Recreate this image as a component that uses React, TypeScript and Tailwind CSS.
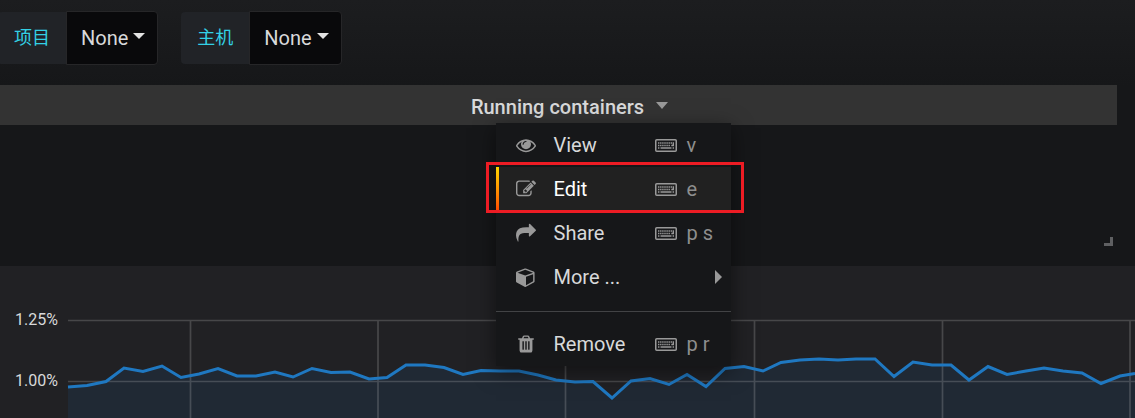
import type { ReactNode } from "react";

const points =
  "68,387 87,385.5 106,381.5 124,368 143,371.5 162,366 181,377.5 199,374 218,368.5 237,376 256,376 275,372 293,377 312,368.5 331,372.5 350,372 369,379 387,377.5 406,365 425,365 444,367.5 463,374.5 481,370.5 500,371 519,371 538,375 556,380 575,382 593,381.5 612,398 631,381 650,378.5 669,384.5 687,374.5 706,386.5 725,368.5 744,366.5 763,371 781,362.5 800,360 819,359 838,360 856,359 875,359 894,376.5 913,362 932,365 951,365 969,380 988,366.5 1007,374.5 1026,371 1044,368 1063,371 1082,373 1101,383.5 1120,376 1135,373.5";

const eye =
  "M1664 960q-152-236-381-353 61 104 61 225 0 185-131.5 316.5t-316.5 131.5-316.5-131.5-131.5-316.5q0-121 61-225-229 117-381 353 133 205 333.5 326.5t434.5 121.5 434.5-121.5 333.5-326.5zm-720-384q0-20-14-34t-34-14q-125 0-214.5 89.5t-89.5 214.5q0 20 14 34t34 14 34-14 14-34q0-86 61-147t147-61q20 0 34-14t14-34zm848 384q0 34-20 69-140 230-376.5 368.5t-499.5 138.5-499.5-139-376.5-368q-20-35-20-69t20-69q140-229 376.5-368t499.5-139 499.5 139 376.5 368q20 35 20 69z";
const pencil =
  "M888 1184l116-116-152-152-116 116v56h96v96h56zm440-720q-16-16-33 1l-350 350q-17 17-1 33t33-1l350-350q17-17 1-33zm80 594v190q0 119-84.5 203.5t-203.5 84.5h-832q-119 0-203.5-84.5t-84.5-203.5v-832q0-119 84.5-203.5t203.5-84.5h832q63 0 117 25 15 7 18 23 3 17-9 29l-49 49q-14 14-32 8-23-6-45-6h-832q-66 0-113 47t-47 113v832q0 66 47 113t113 47h832q66 0 113-47t47-113v-126q0-13 9-22l64-64q15-15 35-7t20 29zm-96-738l288 288-672 672h-288v-288zm444 132l-92 92-288-288 92-92q28-28 68-28t68 28l152 152q28 28 28 68t-28 68z";
const share =
  "M1792 640q0 26-19 45l-512 512q-19 19-45 19t-45-19-19-45v-256h-224q-98 0-175.5 6t-154 21.5-133 42.5-105.5 69.5-80 101-48.5 138.5-17.5 181q0 55 5 123 0 6 2.5 23.5t2.5 26.5q0 15-8.5 25t-23.5 10q-16 0-28-17-7-9-13-22t-13.5-30-10.5-24q-127-285-127-451 0-199 53-333 162-403 875-403h224v-256q0-26 19-45t45-19 45 19l512 512q19 19 19 45z";
const cube =
  "M896 1629l640-349v-636l-640 233v752zm-64-865l698-254-698-254-698 254zm832-252v768q0 35-18 65t-49 47l-704 384q-28 16-61 16t-61-16l-704-384q-31-17-49-47t-18-65v-768q0-40 23-73t61-47l704-256q22-8 44-8t44 8l704 256q38 14 61 47t23 73z";
const trash =
  "M704 1376v-704q0-14-9-23t-23-9h-64q-14 0-23 9t-9 23v704q0 14 9 23t23 9h64q14 0 23-9t9-23zm256 0v-704q0-14-9-23t-23-9h-64q-14 0-23 9t-9 23v704q0 14 9 23t23 9h64q14 0 23-9t9-23zm256 0v-704q0-14-9-23t-23-9h-64q-14 0-23 9t-9 23v704q0 14 9 23t23 9h64q14 0 23-9t9-23zm-544-992h448l-48-117q-7-9-17-11h-317q-10 2-17 11zm928 32v64q0 14-9 23t-23 9h-96v948q0 83-47 143.5t-113 60.5h-832q-66 0-113-58.5t-47-141.5v-952h-96q-14 0-23-9t-9-23v-64q0-14 9-23t23-9h309l70-167q15-37 54-63t79-26h320q40 0 79 26t54 63l70 167h309q14 0 23 9t9 23z";

function Glyph({ d }: { d: string }) {
  return (
    <svg viewBox="0 0 1792 1792" className="size-5 shrink-0 fill-[#999]" aria-hidden="true">
      <path d={d} />
    </svg>
  );
}

function Keyboard() {
  return (
    <svg viewBox="0 0 22 13" className="h-[13px] w-[22px] shrink-0" aria-hidden="true">
      <rect x="0.75" y="0.75" width="20.5" height="11.5" rx="1" fill="none" stroke="#999" strokeWidth="1.5" />
      <path
        d="M3 4H17M3 6.5H15.5M3 9H4.4M17.6 9H19"
        stroke="#999"
        strokeWidth="1.4"
        strokeDasharray="1.4 0.7"
        fill="none"
      />
      <path d="M5.5 9H16.5M18.3 3.3V6.5H16.3" stroke="#999" strokeWidth="1.4" fill="none" />
    </svg>
  );
}

function Variable({ label }: { label: string }) {
  return (
    <div className="flex h-[54px]">
      <span className="my-px flex items-center rounded-l bg-[#212327] px-4 text-lg text-[#33d1e5]">
        {label}
      </span>
      <button
        type="button"
        aria-label={`${label} None`}
        className="flex items-center gap-[5px] rounded-r border border-[#262628] bg-[#09090b] pr-3 pl-3.5 text-xl text-[#d8d9da]"
      >
        None
        <svg viewBox="0 0 12 6" className="-mt-1 h-1.5 w-3 fill-[#e3e3e3]" aria-hidden="true">
          <path d="M0 0h12l-6 6z" />
        </svg>
      </button>
    </div>
  );
}

function Item({
  icon,
  label,
  keys,
  active,
  children,
}: {
  icon: string;
  label: string;
  keys?: string;
  active?: boolean;
  children?: ReactNode;
}) {
  return (
    <li role="none">
      <button
        type="button"
        role="menuitem"
        className={
          active
            ? "relative flex h-11 w-full items-center bg-[#212121] pl-5 text-left text-xl text-white"
            : "relative flex h-11 w-full items-center pl-5 text-left text-xl text-[#d8d9da]"
        }
      >
        {active && (
          <span className="absolute inset-y-0 left-0 w-[3px] bg-linear-to-b from-[#ffd500] to-[#ff4400]" />
        )}
        <Glyph d={icon} />
        <span className="ml-[18px] w-[101px]">{label}</span>
        {keys && (
          <span className="flex items-center gap-2.5 text-[#8e8e8e]">
            <Keyboard />
            {keys}
          </span>
        )}
        {children}
      </button>
    </li>
  );
}

export default function App() {
  return (
    <main className="min-h-screen overflow-hidden bg-[#161719] font-[Roboto,'Noto_Sans_CJK_SC',sans-serif]">
      <header className="flex h-[85px] items-start gap-[23px] bg-linear-to-b from-[#1c1d1f] to-[#161719] pt-[11px]">
        <div className="-ml-0.5">
          <Variable label="项目" />
        </div>
        <Variable label="主机" />
      </header>

      <section className="relative mr-[18px] h-[181px]">
        <h2 className="flex h-10 items-center justify-center bg-[#333] pt-1 pl-[22px]">
          <button
            type="button"
            aria-expanded="true"
            className="flex items-center gap-3 text-xl font-medium text-[#d8d9da]"
          >
            Running containers
            <svg viewBox="0 0 12 7" className="-mt-1 h-[7px] w-3 fill-[#999]" aria-hidden="true">
              <path d="M0 0h12l-6 7z" />
            </svg>
          </button>
        </h2>

        <div className="absolute top-[38px] left-1/2 z-10 -ml-[63px] w-[235px] bg-[#161719] shadow-[0_5px_20px_0_rgba(0,0,0,0.5)]">
          <ul role="menu">
            <Item icon={eye} label="View" keys="v" />
            <Item icon={pencil} label="Edit" keys="e" active />
            <Item icon={share} label="Share" keys="p s" />
            <Item icon={cube} label="More ...">
              <svg viewBox="0 0 7 14" className="ml-auto mr-[9px] h-3.5 w-[7px] fill-[#999]" aria-hidden="true">
                <path d="M0 0l7 7-7 7z" />
              </svg>
            </Item>
            <li role="separator" className="mt-3 mb-2.5 h-px bg-[#424345]" />
            <Item icon={trash} label="Remove" keys="p r" />
          </ul>
          <div className="pointer-events-none absolute top-[39px] -right-[13px] -left-[10px] h-[51px] border-3 border-[#ed1c24]" />
        </div>

        <span className="absolute right-1 bottom-5 size-[9px] border-r-3 border-b-3 border-[#5f6062]" />
      </section>

      <section className="relative h-[152px] overflow-hidden bg-[#212124]">
        <svg
          viewBox="0 266 1135 152"
          preserveAspectRatio="none"
          className="block h-full w-full"
          role="img"
          aria-label="CPU"
        >
          <polygon points={`68,418 ${points} 1135,418`} fill="#1f78c1" fillOpacity="0.1" />
          <path
            d="M68 320.5H1135M68 381.5H1135M190.5 320V418M378 320V418M565.5 320V418M754.5 320V418M942.5 320V418M1130 320V418"
            stroke="#c8c8c8"
            strokeOpacity="0.23"
            strokeWidth="1.7"
          />
          <polyline points={points} fill="none" stroke="#1f78c1" strokeWidth="3" />
        </svg>
        <div className="absolute top-[44px] left-[15px] flex flex-col gap-[41px] text-base leading-5 text-[#d8d9da]">
          <span>1.25%</span>
          <span>1.00%</span>
        </div>
      </section>
    </main>
  );
}
